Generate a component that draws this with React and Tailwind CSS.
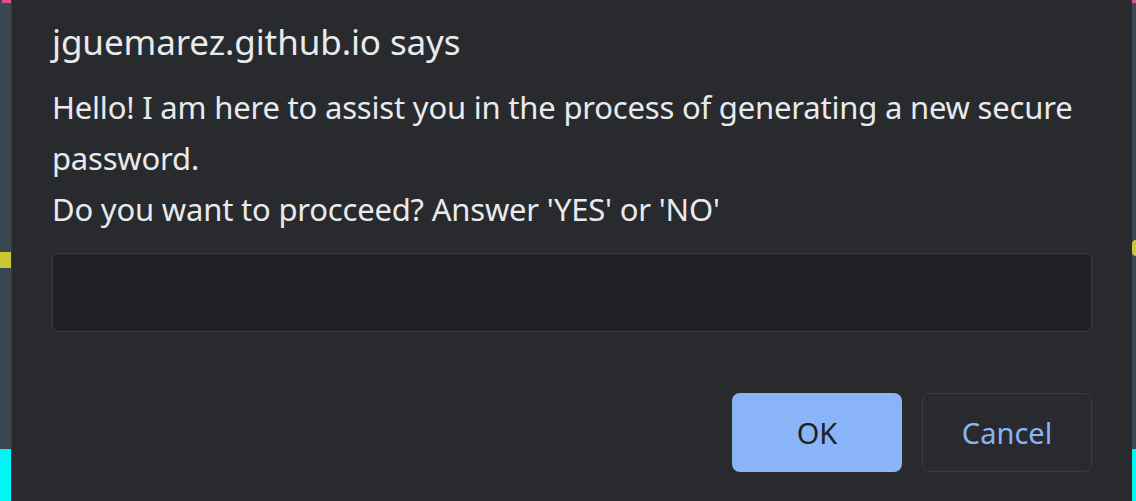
export default function App() {
  return (
    <div className="w-[1136px] h-[501px] flex overflow-hidden bg-[#292a2d]" style={{ fontFamily: '"Noto Sans", "Open Sans", sans-serif' }}>
      <div className="w-[11px] flex flex-col bg-[#3b4852]">
        <div className="h-[3px] ml-[2px] bg-[#e0508f]" />
        <div className="h-[249px]" />
        <div className="h-[16px] bg-[#c8c832]" />
        <div className="flex-1" />
        <div className="h-[52px] bg-[#00f5f5]" />
      </div>
      <div className="w-[1px] bg-[#313840]" />
      <div className="flex-1 flex flex-col px-[40px] text-[#e8eaed]">
        <div className="pt-[22px] text-[35px] leading-[40px] tracking-[-0.1px] whitespace-nowrap">jguemarez.github.io says</div>
        <div className="mt-[20px] text-[31px] leading-[51px] tracking-[-0.2px] whitespace-nowrap">
          <div>Hello! I am here to assist you in the process of generating a new secure</div>
          <div>password.</div>
          <div>Do you want to procceed? Answer 'YES' or 'NO'</div>
        </div>
        <div className="mt-[18px] h-[79px] rounded-[5px] border border-[#3a3b3e] bg-[#202124]" />
        <div className="mt-[61px] flex justify-end gap-[20px]">
          <button className="w-[170px] h-[79px] rounded-[8px] bg-[#8ab4f8] text-[#202124] text-[29px]">OK</button>
          <button className="w-[170px] h-[79px] rounded-[8px] border border-[#3c3d40] text-[#8ab4f8] text-[29px]">Cancel</button>
        </div>
      </div>
      <div className="w-[4px] flex flex-col bg-[#3b4852]">
        <div className="h-[3px] bg-[#e0508f]" />
        <div className="h-[237px]" />
        <div className="h-[16px] bg-[#c8c832] rounded-l-full" />
        <div className="flex-1" />
        <div className="h-[52px] bg-[#00f5f5]" />
      </div>
    </div>
  );
}
